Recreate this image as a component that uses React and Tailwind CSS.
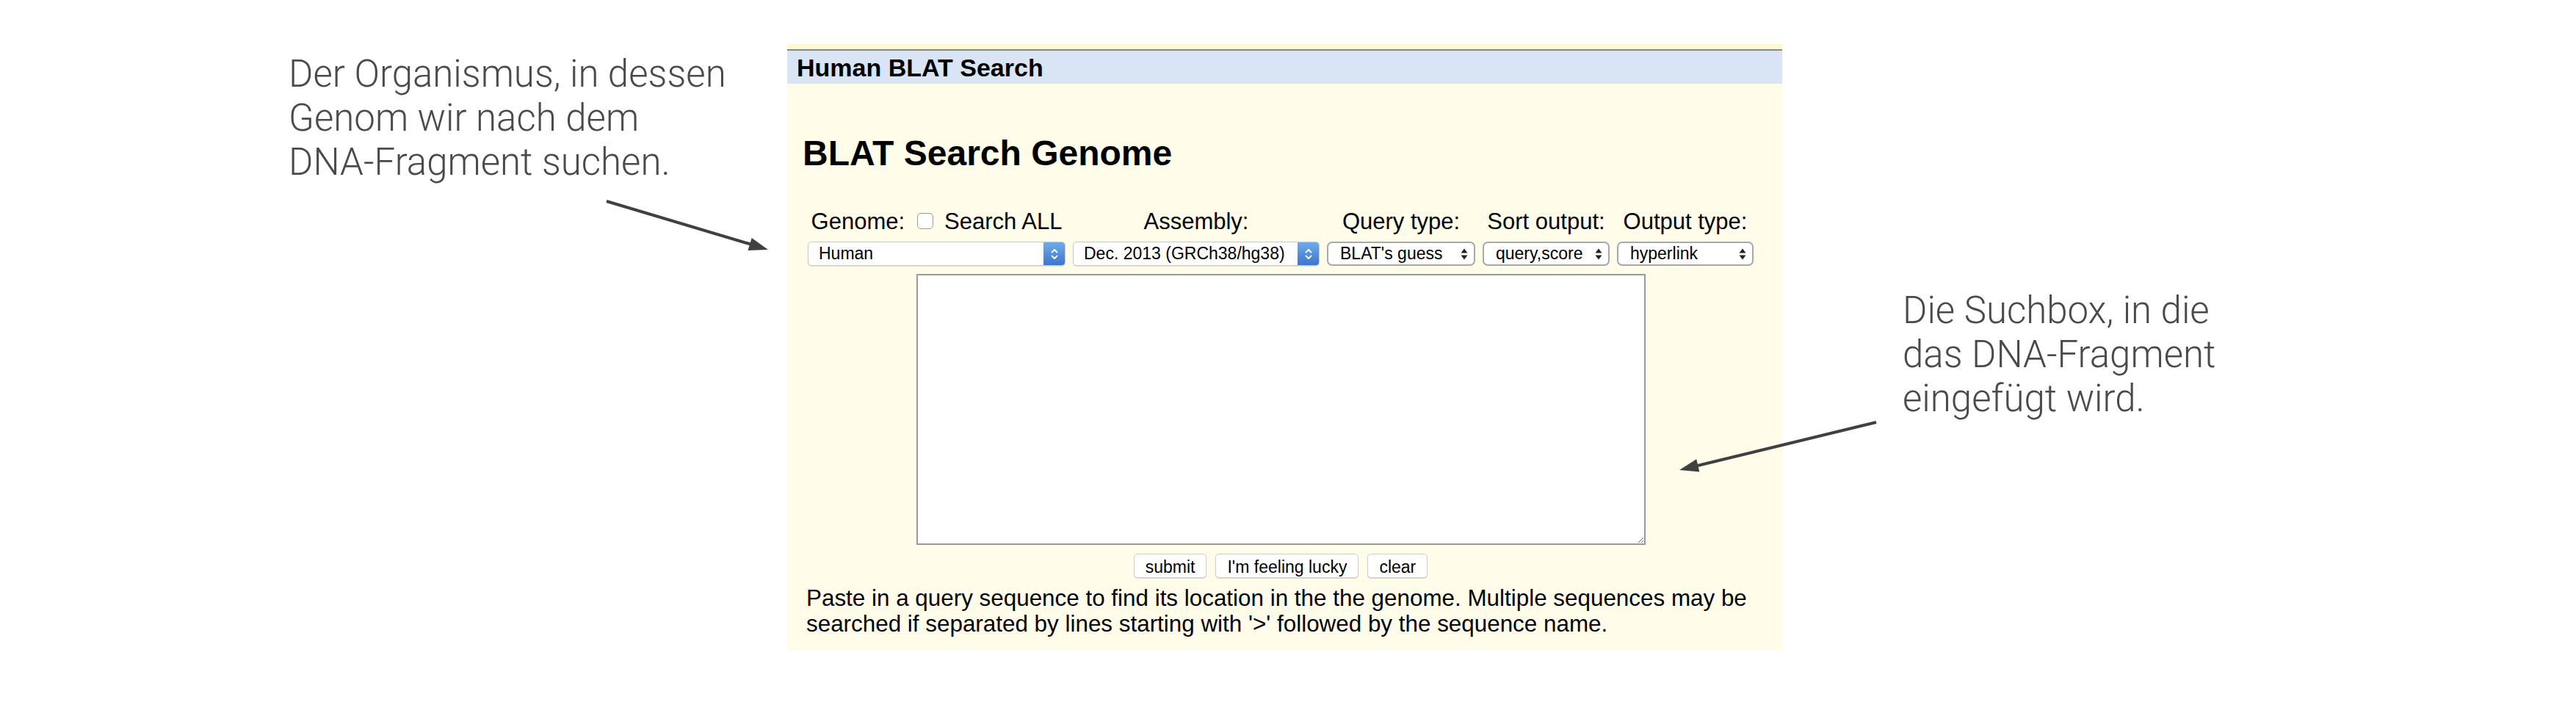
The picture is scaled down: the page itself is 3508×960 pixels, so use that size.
const ui = "font-['Liberation_Sans',Arial,sans-serif]";
const note = "font-['Roboto','Liberation_Sans',sans-serif] font-light text-[51px] leading-[60px] text-[#4a4a4a] whitespace-nowrap";

function Stepper() {
  return (
    <svg width="12" height="22" viewBox="0 0 12 22" fill="none">
      <path d="M2.5 8.5 L6 5 L9.5 8.5" stroke="white" strokeWidth="1.8" strokeLinecap="round" strokeLinejoin="round" />
      <path d="M2.5 13.5 L6 17 L9.5 13.5" stroke="white" strokeWidth="1.8" strokeLinecap="round" strokeLinejoin="round" />
    </svg>
  );
}

function Arrows() {
  return (
    <svg width="10" height="20" viewBox="0 0 10 20">
      <path d="M5 2.5 L9.5 8.5 L0.5 8.5 Z" fill="#222" />
      <path d="M0.5 11.5 L9.5 11.5 L5 17.5 Z" fill="#222" />
    </svg>
  );
}

function StepperSelect({ value }) {
  return (
    <div className="flex h-[33px] w-full overflow-hidden rounded-[5px] border border-[#c9c9c9] bg-white shadow-[0_1px_1px_rgba(0,0,0,0.12)]">
      <span className="flex flex-1 items-center pl-[14px] text-[23px] text-black">{value}</span>
      <span className="flex w-[29px] items-center justify-center bg-linear-to-b from-[#72abea] to-[#3b76cd]">
        <Stepper />
      </span>
    </div>
  );
}

function PlainSelect({ value }) {
  return (
    <div className="flex h-[33px] w-full items-center justify-between rounded-[7px] border-2 border-[#a8a8a8] bg-white pl-[16px] pr-[8px]">
      <span className="text-[23px] text-black">{value}</span>
      <Arrows />
    </div>
  );
}

const columns = [
  { key: 'genome', width: 'w-[351px]', kind: 'stepper', value: 'Human' },
  { key: 'assembly', label: 'Assembly:', width: 'w-[336px]', kind: 'stepper', value: 'Dec. 2013 (GRCh38/hg38)' },
  { key: 'query', label: 'Query type:', width: 'w-[202px]', kind: 'plain', value: "BLAT's guess" },
  { key: 'sort', label: 'Sort output:', width: 'w-[173px]', kind: 'plain', value: 'query,score' },
  { key: 'output', label: 'Output type:', width: 'w-[186px]', kind: 'plain', value: 'hyperlink' },
];

function Button({ children }) {
  return (
    <button className="h-[33px] rounded-[5px] border border-[#cfcfcf] bg-white px-[15px] text-[23px] text-black shadow-[0_1px_1px_rgba(0,0,0,0.15)]">
      {children}
    </button>
  );
}

export default function App() {
  return (
    <div className={`relative flex h-[960px] w-[3508px] items-start overflow-hidden bg-white ${ui}`}>
      {/* left note */}
      <div className="w-[1072px] shrink-0 pl-[393px] pt-[71px]">
        <div className={note}>Der Organismus, in dessen</div>
        <div className={note}>Genom wir nach dem</div>
        <div className={note}>DNA-Fragment suchen.</div>
      </div>

      {/* BLAT panel */}
      <div className="mt-[60px] flex w-[1355px] shrink-0 flex-col bg-[#fffde9]">
        <div className="h-[7px] bg-[#fff8d4]" />
        <div className="h-[2px] bg-[#888888]" />
        <div className="flex h-[45px] items-center bg-[#d9e4f5] pl-[13px]">
          <span className="text-[34px] font-bold leading-none text-black">Human BLAT Search</span>
        </div>

        <div className="pl-[21px] pt-[71px]">
          <h1 className="text-[48px] font-bold leading-none text-black">BLAT Search Genome</h1>
        </div>

        <div className="ml-[28px] mt-[53px] w-[1288px] pb-[18px]">
          <div className="flex gap-[10px]">
            {columns.map((col) => (
              <div key={col.key} className={`flex shrink-0 flex-col items-center gap-[13px] ${col.width}`}>
                <div className="flex h-[30px] items-center whitespace-nowrap text-[31px] leading-none text-black">
                  {col.key === 'genome' ? (
                    <>
                      <span>Genome:</span>
                      <span className="ml-[17px] mr-[15px] inline-block h-[22px] w-[22px] rounded-[5px] border border-[#a0a0a0] bg-white shadow-[inset_0_1px_1px_rgba(0,0,0,0.08)]" />
                      <span>Search ALL</span>
                    </>
                  ) : (
                    col.label
                  )}
                </div>
                {col.kind === 'stepper' ? <StepperSelect value={col.value} /> : <PlainSelect value={col.value} />}
              </div>
            ))}
          </div>

          <textarea className="mx-auto mt-[11px] block h-[369px] w-[993px] resize border-2 border-[#9a9a9a] bg-white" />

          <div className="mt-[12px] flex justify-center gap-[12px]">
            <Button>submit</Button>
            <Button>I'm feeling lucky</Button>
            <Button>clear</Button>
          </div>

          <p className="-ml-[2px] mt-[10px] w-[1294px] text-[31.4px] leading-[35px] text-black">
            Paste in a query sequence to find its location in the the genome. Multiple sequences may be searched if
            separated by lines starting with '&gt;' followed by the sequence name.
          </p>
        </div>
      </div>

      {/* right note */}
      <div className="shrink-0 pl-[164px] pt-[393px]">
        <div className={note}>Die Suchbox, in die</div>
        <div className={note}>das DNA-Fragment</div>
        <div className={note}>eingefügt wird.</div>
      </div>

      {/* pointer arrows */}
      <svg className="pointer-events-none absolute left-0 top-0" width="3508" height="960" viewBox="0 0 3508 960">
        <line x1="826" y1="274" x2="1022" y2="332.5" stroke="#404040" strokeWidth="4" />
        <polygon points="1046,340 1018.5,341.1 1023.7,323.9" fill="#404040" />
        <line x1="2555" y1="575" x2="2312" y2="634" stroke="#404040" strokeWidth="4" />
        <polygon points="2287,640 2310.2,625.2 2314.4,642.6" fill="#404040" />
      </svg>
    </div>
  );
}
